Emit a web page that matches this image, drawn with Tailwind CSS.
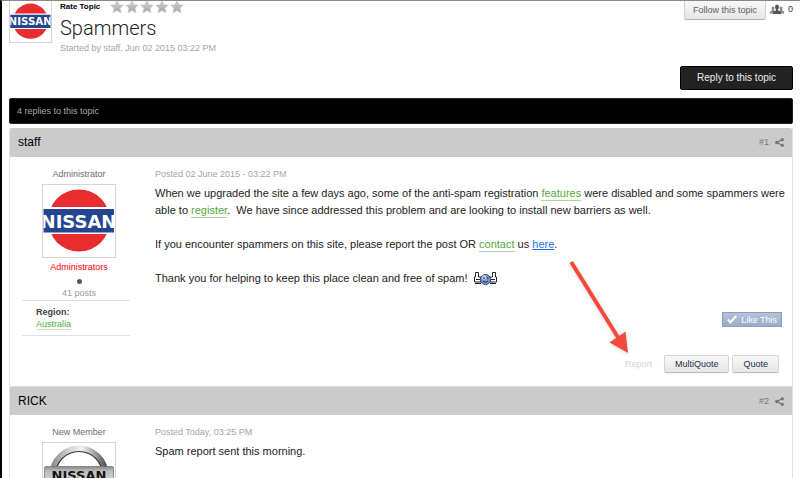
<!DOCTYPE html>
<html lang="en">
<head>
  <meta charset="UTF-8">
  <meta name="viewport" content="width=device-width, initial-scale=1.0">
  <script src="https://cdn.jsdelivr.net/npm/@tailwindcss/browser@4"></script>
  <title>Spammers</title>
</head>
<body class="min-h-screen overflow-hidden border-l-2 border-t border-l-black border-t-[#888] bg-white pr-[7px] pl-[7px] font-['Liberation_Sans',Arial,sans-serif] text-[11px] leading-[17px] text-[#222]">

  <!-- Shared shapes -->
  <svg width="0" height="0" class="absolute" aria-hidden="true">
    <defs>
      <linearGradient id="starFill" x1="0" y1="0" x2="0" y2="1">
        <stop offset="0" stop-color="#cfcfcf"/>
        <stop offset="1" stop-color="#a8a8a8"/>
      </linearGradient>
      <linearGradient id="chrome" x1="0" y1="0" x2="1" y2="0">
        <stop offset="0" stop-color="#8c8c8c"/>
        <stop offset="0.3" stop-color="#d0d0d0"/>
        <stop offset="0.55" stop-color="#f2f2f2"/>
        <stop offset="0.8" stop-color="#a0a0a0"/>
        <stop offset="1" stop-color="#555"/>
      </linearGradient>
      <linearGradient id="plate" x1="0" y1="0" x2="0" y2="1">
        <stop offset="0" stop-color="#888"/>
        <stop offset="0.25" stop-color="#bbb"/>
        <stop offset="1" stop-color="#ddd"/>
      </linearGradient>
      <symbol id="star" viewBox="0 0 14 14">
        <path d="M7 .8l1.8 4 4.4.4-3.3 3 1 4.5L7 10.400l-3.900 2.300 1-4.500-3.300-3 4.400-.4z" fill="url(#starFill)" stroke="#c4c4c4" stroke-width=".8"/>
      </symbol>
      <symbol id="share" viewBox="0 0 9 9">
        <path d="M7 1.8L2 4.5l5 2.8" fill="none" stroke="#777" stroke-width="1.200"/>
        <circle cx="7.300" cy="1.700" r="1.600" fill="#777"/>
        <circle cx="1.800" cy="4.500" r="1.700" fill="#777"/>
        <circle cx="7.300" cy="7.300" r="1.600" fill="#777"/>
      </symbol>
      <symbol id="nissan" viewBox="0 0 72 72">
        <circle cx="36" cy="35.500" r="31" fill="#e92c2e"/>
        <path d="M0 22h72v27H0z" fill="#fff"/>
        <path d="M.5 24h70.500v23.500H.5z" fill="#24468f"/>
        <svg x=".5" y="24" width="70.500" height="23.500">
          <text x="35" y="18.500" text-anchor="middle" font-family="DejaVu Sans" font-weight="bold" font-size="18" fill="#fff">NISSAN</text>
        </svg>
      </symbol>
    </defs>
  </svg>

  <!-- Topic heading -->
  <div class="flex h-[65px] items-start">
    <a href="#" class="-mt-px h-[43px] w-[43px] shrink-0 border border-[#d5d5d5] bg-white">
      <svg class="h-full w-full" role="img" aria-label="staff"><use href="#nissan"/></svg>
    </a>
    <div class="ml-2">
      <div class="flex h-[11px] items-center gap-2.5">
        <span class="text-[8px] font-bold text-black">Rate Topic</span>
        <div class="flex gap-px">
          <button type="button" aria-label="1 star"><svg class="h-3.5 w-3.5"><use href="#star"/></svg></button>
          <button type="button" aria-label="2 stars"><svg class="h-3.5 w-3.5"><use href="#star"/></svg></button>
          <button type="button" aria-label="3 stars"><svg class="h-3.5 w-3.5"><use href="#star"/></svg></button>
          <button type="button" aria-label="4 stars"><svg class="h-3.5 w-3.5"><use href="#star"/></svg></button>
          <button type="button" aria-label="5 stars"><svg class="h-3.5 w-3.5"><use href="#star"/></svg></button>
        </div>
      </div>
      <h1 class="mt-1 font-[Roboto,'Liberation_Sans',sans-serif] text-[20px] leading-6 font-light">Spammers</h1>
      <p class="text-[9px] leading-4 text-[#a4a4a4]">Started by staff, Jun 02 2015 03:22 PM</p>
    </div>
    <div class="ml-auto flex items-start gap-1">
      <button type="button" class="h-[19px] rounded-b-xs border border-t-0 border-[#d0d0d0] border-b-[#b5b5b5] bg-linear-to-b from-[#f8f8f8] to-[#e6e6e6] px-2 text-[9px] text-[#616161]">Follow this topic</button>
      <span class="flex h-4 items-center gap-1 text-[9px] text-[#333]">
        <svg class="h-[11px] w-[14px]" viewBox="0 0 14 11" fill="#555" role="img" aria-label="Followers">
          <circle cx="3" cy="4" r="1.500" fill="#888"/>
          <circle cx="11" cy="4" r="1.500" fill="#888"/>
          <path d="M0 9.500V8c0-1 1-1 2-1.500V5h2v4.500zM14 9.500V8c0-1-1-1-2-1.500V5h-2v4.500z" fill="#888"/>
          <ellipse cx="7" cy="3" rx="2" ry="2.500"/>
          <path d="M6 4h2v2.500c1.500.5 3 .7 3 2v1.500H3V8.500c0-1.300 1.500-1.500 3-2z"/>
        </svg>
        0
      </span>
    </div>
  </div>

  <div class="flex justify-end">
    <a href="#" class="rounded-xs border border-black bg-[#222] px-4 py-[3px] text-[10px] leading-4 text-[#eee]">Reply to this topic</a>
  </div>

  <div class="mt-2 rounded-xs border border-[#222] bg-black px-[7px] py-1 text-[9px] leading-4 text-[#aaa]">4 replies to this topic</div>

  <!-- Posts -->
  <main class="relative mt-1 border-x border-[#dfe2e5]">
    <article>
      <header class="flex h-[29px] items-center justify-between rounded-t-xs bg-[#cbcbcb] pr-2 pl-2">
        <h2 class="text-[12px] text-black">staff</h2>
        <span class="flex items-center gap-1.5 text-[9px] text-[#777]">
          <a href="#">#1</a>
          <a href="#" aria-label="Share"><svg class="h-[9px] w-[9px]"><use href="#share"/></svg></a>
        </span>
      </header>
      <div class="flex pt-2">
        <aside class="ml-3 w-[108px] shrink-0 text-[9px]">
          <div class="flex flex-col items-center pl-1.5 leading-[18px]">
            <p class="text-[#6c6c6c]">Administrator</p>
            <a href="#" class="mt-px h-[74px] w-[74px] border border-[#d5d5d5]">
              <svg class="h-full w-full" role="img" aria-label="staff"><use href="#nissan"/></svg>
            </a>
            <p class="text-[#f00]">Administrators</p>
            <span class="my-[3px] h-[5px] w-[5px] rounded-full bg-[#555]"></span>
            <p class="leading-[13px] text-[#999]">41 posts</p>
          </div>
          <dl class="border-y border-[#dde3e3] py-[5px] pl-3.5 leading-3">
            <dt class="font-bold text-[#444]">Region:</dt>
            <dd><a href="#" class="border-b border-[#cde5c4] text-[#55a83d]">Australia</a></dd>
          </dl>
        </aside>
        <div class="ml-[25px] min-w-0 flex-1">
          <p class="text-[9px] leading-[18px] text-[#a4a4a4]">Posted 02 June 2015 - 03:22 PM</p>
          <div class="space-y-[17px] pt-0.5 pr-1">
            <p>When we upgraded the site a few days ago, some of the anti-spam registration <a href="#" class="border-b border-[#a8d59a] pb-px text-[#55a83d]">features</a> were disabled and some spammers were able to <a href="#" class="border-b border-[#a8d59a] pb-px text-[#55a83d]">register</a>.&nbsp; We have since addressed this problem and are looking to install new barriers as well.</p>
            <p>If you encounter spammers on this site, please report the post OR <a href="#" class="border-b border-[#a8d59a] pb-px text-[#55a83d]">contact</a> us <a href="#" class="text-[#1a6fe8] underline">here</a>.</p>
            <p class="flex items-center gap-1.5">Thank you for helping to keep this place clean and free of spam!
              <svg class="h-[15px] w-[25px]" viewBox="0 0 25 15" role="img" aria-label="thumbs up">
                <path d="M2.500 1.500h3V6H8v5H1.500V6h1zM22.500 1.500h-3V6H17v5h6.500V6h-1z" fill="#fff" stroke="#222"/>
                <path d="M2 12.500h6M17 12.500h6M3 8.500h4M18 8.500h4" stroke="#222"/>
                <circle cx="12.500" cy="8.500" r="5" fill="#7997cf" stroke="#31466f"/>
                <circle cx="11" cy="6.500" r="2.200" fill="#bfd2f6"/>
                <path d="M10 7h2M14 7h1.500M10 10c1.500 1.500 3.500 1.500 5 0" fill="none" stroke="#223"/>
              </svg>
            </p>
          </div>
          <div class="flex justify-end pt-[25px] pr-[10px]">
            <button type="button" class="flex h-[15px] items-center gap-1 border border-[#8a9fc0] bg-linear-to-b from-[#b4c2d8] to-[#9bacc8] px-1 text-[9px] leading-3 text-white">
              <svg class="h-[9px] w-[10px]" viewBox="0 0 10 9" fill="none" stroke="#fff" stroke-width="2"><path d="M.8 4.500l2.700 2.700L9.300 1"/></svg>
              Like This
            </button>
          </div>
          <div class="flex items-center justify-end gap-[3px] pt-7 pr-[13px] pb-[13px] text-[9px] text-[#1d2d46]">
            <a href="#" class="mr-[9px] text-[#d2d4d8]">Report</a>
            <button type="button" class="h-[18px] rounded-xs border border-[#d5d5d5] border-b-[#bbb] bg-linear-to-b from-[#f8f8f8] to-[#e6e6e6] px-[10px] leading-4 shadow-xs">MultiQuote</button>
            <button type="button" class="h-[18px] rounded-xs border border-[#d5d5d5] border-b-[#bbb] bg-linear-to-b from-[#f8f8f8] to-[#e6e6e6] px-[10px] leading-4 shadow-xs">Quote</button>
          </div>
        </div>
      </div>
    </article>

    <article>
      <header class="flex h-[29px] items-center justify-between border-t border-[#d8dde0] bg-[#cbcbcb] pr-2 pl-2">
        <h2 class="text-[12px] text-black">RICK</h2>
        <span class="flex items-center gap-1.5 text-[9px] text-[#777]">
          <a href="#">#2</a>
          <a href="#" aria-label="Share"><svg class="h-[9px] w-[9px]"><use href="#share"/></svg></a>
        </span>
      </header>
      <div class="flex pt-2">
        <aside class="ml-3 w-[108px] shrink-0 text-[9px]">
          <div class="flex flex-col items-center pl-1.5 leading-[18px]">
            <p class="text-[#6c6c6c]">New Member</p>
            <a href="#" class="mt-px h-[74px] w-[74px] border border-[#d5d5d5]">
              <svg class="h-full w-full" viewBox="0 0 72 72" role="img" aria-label="RICK">
                <circle cx="36" cy="32" r="26.500" fill="none" stroke="url(#chrome)" stroke-width="6"/>
                <circle cx="36" cy="32" r="23.500" fill="none" stroke="#333" stroke-width="1.200"/>
                <rect x="1.500" y="23.500" width="69" height="18" rx="1.500" fill="url(#plate)" stroke="#777" stroke-width=".8"/>
                <text x="36" y="37" text-anchor="middle" font-family="DejaVu Sans" font-weight="bold" font-size="13" fill="#111">NISSAN</text>
              </svg>
            </a>
          </div>
        </aside>
        <div class="ml-[25px] min-w-0 flex-1">
          <p class="text-[9px] leading-[18px] text-[#a4a4a4]">Posted Today, 03:25 PM</p>
          <p class="pt-0.5">Spam report sent this morning.</p>
        </div>
      </div>
    </article>

    <!-- Arrow pointing at the Report link -->
    <svg class="pointer-events-none absolute top-[132px] right-[160px] h-[98px] w-[64px] drop-shadow-sm" viewBox="0 0 64 98" aria-hidden="true">
      <path d="M3.200 2L51 79" stroke="#f4493c" stroke-width="4"/>
      <path d="M60 93L41.500 82.500 57.500 71.500z" fill="#f4493c"/>
    </svg>
  </main>

</body>
</html>
